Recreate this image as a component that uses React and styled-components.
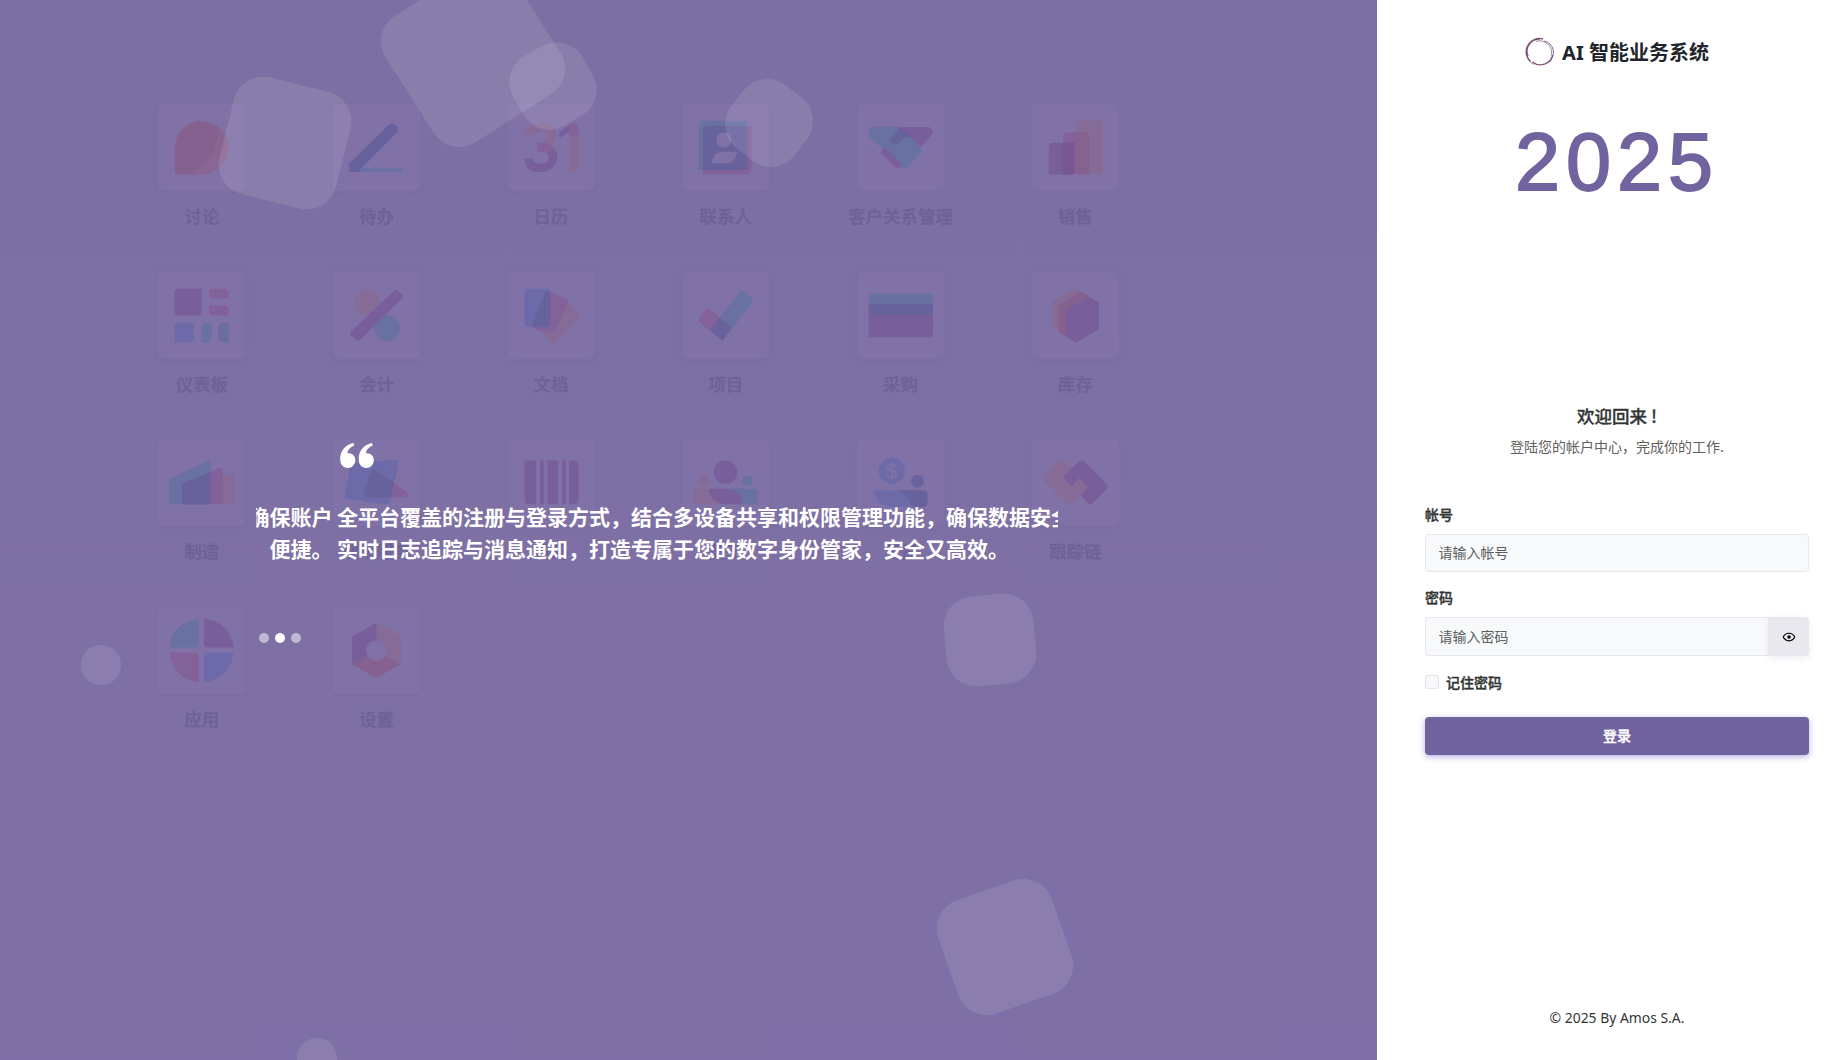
import React from 'react';
import styled, { createGlobalStyle } from 'styled-components';

const Global = createGlobalStyle`
  *, *::before, *::after { box-sizing: border-box; }
  body { margin: 0; overflow: hidden; font-family: "Noto Sans", "Noto Sans CJK SC", sans-serif; }
`;

const C = {
  teal: '#6970a2', purple: '#785f9b', orange: '#866b97', pink: '#83629a',
  navy: '#67629b', blue: '#6c6aa9', red: '#84618f', wine: '#7d6190', tile: '#8072a7',
};

const Page = styled.div`
  display: grid;
  grid-template-columns: 1377px 1fr;
  height: 1060px;
`;

const Hero = styled.section`
  position: relative;
  display: grid;
  grid-template: 1060px / 1377px;
  overflow: hidden;
  background: linear-gradient(180deg, #7c6fa3 0%, #7e70a5 55%, #7e70a6 100%);
  > * { grid-area: 1 / 1; }
`;

const AppGrid = styled.div`
  display: grid;
  grid-template-columns: repeat(6, 174.7px);
  grid-auto-rows: 167.7px;
  padding: 104px 0 0 114.4px;
`;

const AppItem = styled.div`
  display: flex;
  flex-direction: column;
  align-items: center;
`;

const Tile = styled.svg`
  flex: none;
  width: 87px;
  height: 87px;
  border-radius: 5px;
  background: ${C.tile};
  box-shadow: 0 2px 5px rgba(80, 60, 130, 0.06);
`;

const AppName = styled.span`
  margin-top: 12px;
  font: 500 17.5px/25px "Noto Sans CJK SC", sans-serif;
  color: #6e6198;
  -webkit-text-stroke: 0.3px #6e6198;
  white-space: nowrap;
`;

const Blob = styled.i`
  position: absolute;
  left: ${(p) => p.$x - p.$size / 2}px;
  top: ${(p) => p.$y - p.$size / 2}px;
  width: ${(p) => p.$size}px;
  height: ${(p) => p.$size}px;
  border-radius: 30px;
  background: rgba(255, 255, 255, 0.1);
  transform: rotate(${(p) => p.$turn || 0}deg);
`;

const Carousel = styled.div`
  z-index: 1;
  width: 802px;
  margin: 443px 0 0 256px;
  overflow: hidden;
  align-self: start;
`;

const Track = styled.div`
  display: flex;
  width: 1604px;
  transform: translateX(-721px);
`;

const Slide = styled.div`
  flex: 0 0 802px;
  padding-right: ${(p) => (p.$previous ? '4.5px' : '0')};
  text-align: ${(p) => (p.$previous ? 'right' : 'left')};
`;

const QuoteMark = styled.svg`
  display: block;
  width: 37px;
  height: 25px;
  margin: 0 0 32px 2px;
  visibility: ${(p) => (p.$hidden ? 'hidden' : 'visible')};
`;

const QuoteText = styled.p`
  margin: 0;
  font: 700 21px/32px "Noto Sans CJK SC", sans-serif;
  color: #fff;
  white-space: nowrap;
`;

const Dots = styled.div`
  display: flex;
  gap: 6px;
  padding: 69px 0 0 3px;
`;

const Dot = styled.i`
  width: 10px;
  height: 10px;
  border-radius: 50%;
  background: ${(p) => (p.$active ? '#fff' : 'rgba(255, 255, 255, 0.5)')};
`;

const Side = styled.main`
  display: flex;
  flex-direction: column;
  padding: 32px 39px 0 48px;
  background: #fff;
  color: #313533;
`;

const Brand = styled.header`
  display: flex;
  align-items: center;
  justify-content: center;
  gap: 7px;
  height: 40px;
  font: 700 20px/40px "Noto Sans", "Noto Sans CJK SC", sans-serif;
  color: #212529;
`;

const BrandName = styled.span`
  padding-top: 2px;
`;

const Year = styled.div`
  height: 92px;
  margin-top: 44px;
  text-align: center;
  font: 400 81px/92px "Liberation Sans", sans-serif;
  letter-spacing: 6px;
  color: #71639e;
  -webkit-text-stroke: 1.8px #71639e;
`;

const Welcome = styled.h1`
  margin: 194px 0 0;
  text-align: center;
  font: 500 17.5px/28px "Noto Sans CJK SC", sans-serif;
  -webkit-text-stroke: 0.3px #313533;
`;

const Hint = styled.p`
  margin: 5px 0 0;
  text-align: center;
  font: 400 14px/22px "Noto Sans CJK SC", sans-serif;
  color: #5f6160;
`;

const Form = styled.form`
  display: flex;
  flex-direction: column;
  margin-top: 47px;
`;

const Label = styled.label`
  font: 500 14px/21px "Noto Sans CJK SC", sans-serif;
  color: #313533;
  -webkit-text-stroke: 0.35px #313533;
`;

const Field = styled.div`
  display: flex;
  height: ${(p) => p.$height}px;
  margin: 9px 0 ${(p) => p.$after}px;
`;

const Input = styled.input`
  flex: 1;
  min-width: 0;
  padding: 0 12.5px 1px;
  border: 1px solid #e7e7ee;
  border-right-width: ${(p) => (p.$joined ? 0 : '1px')};
  border-radius: ${(p) => (p.$joined ? '4px 0 0 4px' : '4px')};
  background: #f8f9fb;
  font: 400 14px/21px "Noto Sans CJK SC", sans-serif;
  outline: 0;
  &::placeholder { color: #5a5e5d; opacity: 1; }
`;

const EyeButton = styled.button`
  display: flex;
  align-items: center;
  justify-content: center;
  width: 41px;
  padding: 0;
  border: 0;
  border-radius: 0 4px 4px 0;
  background: #e9e8ef;
  box-shadow: 0 2px 6px rgba(130, 120, 180, 0.14);
`;

const Remember = styled.div`
  display: flex;
  align-items: center;
  gap: 7px;
  height: 21px;
`;

const Check = styled.input`
  appearance: none;
  width: 14px;
  height: 14px;
  margin: -2px 0 0;
  border: 1px solid #e3e3ea;
  border-radius: 3px;
  background: #f8f9fb;
`;

const Submit = styled.button`
  height: 38px;
  margin-top: 24px;
  padding: 0 0 1px;
  border: 0;
  border-radius: 4px;
  background: #71639e;
  box-shadow: 0 2px 6px rgba(98, 84, 200, 0.45);
  font: 500 14px/21px "Noto Sans CJK SC", sans-serif;
  color: #fff;
  -webkit-text-stroke: 0.35px #fff;
`;

const Footer = styled.footer`
  margin-top: 252px;
  text-align: center;
  font: 400 13.9px/21px "Noto Sans", sans-serif;
`;

/* App drawings share one 260-unit square per tile. */
const apps = [
  ['讨论', <>
    <path d="M50 130A80 80 0 1 1 130 211H62Q50 211 50 199Z" fill={C.red} />
    <path d="M181 70A80 80 0 0 1 130 211H92Q180 170 181 70Z" fill="#8a6694" />
  </>],
  ['待办', <>
    <path d="M75 192H204Q212 193 209 198Q208 203 202 203H75Z" fill={C.teal} />
    <path d="M48 203V178L166 63A17 17 0 0 1 191 85L74 203Z" fill={C.navy} />
  </>],
  ['日历', <>
    <g fill="none" strokeWidth="25">
      <path d="M61 93C66 66 131 58 130 96Q130 124 88 128" stroke={C.orange} />
      <path d="M88 128C151 126 147 191 96 191Q63 191 61 162" stroke={C.purple} />
      <path d="M88 128Q118 130 128 142" stroke={C.pink} />
    </g>
    <path d="M184 80H212V190Q212 203 200 203H184Z" fill={C.orange} />
    <path d="M153 103V86L184 62Q205 52 212 70V78L184 82Z" fill={C.purple} />
    <path d="M184 62Q208 52 212 75V90Q205 98 184 96Z" fill={C.pink} />
  </>],
  ['联系人', <>
    <path d="M62 65H208V195Q208 211 190 211H62Z" fill={C.pink} />
    <path d="M50 68Q50 50 68 50H195V197H50Z" fill={C.teal} />
    <path d="M62 80Q62 65 78 65H195V197H62Z" fill={C.navy} />
    <ellipse cx="125" cy="108" rx="22" ry="23" fill={C.tile} />
    <path d="M89 177Q92 143 122 143H164Q162 177 130 177Z" fill={C.tile} />
  </>],
  ['客户关系管理', <>
    <path d="M120 69H212Q233 72 223 92L192 127L150 112Z" fill={C.purple} />
    <path d="M84 130L134 180Q130 196 118 193L72 151Q70 136 84 130Z" fill={C.pink} />
    <path d="M46 69H130L190 130Q197 138 190 147L149 190Q141 197 133 188L38 98Q24 78 46 69Z" fill={C.teal} />
    <path d="M130 69L162 100Q147 96 135 107L120 120Q108 124 98 111V102Z" fill={C.navy} />
    <path d="M84 130L134 180L126 190L72 145Z" fill={C.purple} />
  </>],
  ['销售', <>
    <path d="M133 62Q133 50 145 50H200Q212 50 212 62V199Q212 211 200 211H133Z" fill={C.orange} />
    <path d="M93 97Q93 85 105 85H170V199Q170 211 158 211H93Z" fill={C.pink} />
    <path d="M133 85H170V199Q170 211 158 211H133Z" fill="#85628f" />
    <path d="M50 128Q50 116 62 116H127V199Q127 211 115 211H50Z" fill={C.purple} />
    <path d="M93 116H127V199Q127 211 115 211H93Z" fill="#765791" />
  </>],
  ['仪表板', <>
    <path d="M49 61Q49 50 60 50H130V119Q130 130 119 130H49Z" fill={C.purple} />
    <path d="M153 50H198Q211 50 211 64V80H166Q153 80 153 66Z" fill={C.pink} />
    <path d="M153 99H198Q211 99 211 113V130H166Q153 130 153 116Z" fill="#84609a" />
    <path d="M49 164Q49 152 61 152H107V199Q107 211 95 211H49Z" fill={C.blue} />
    <path d="M130 168Q130 152 144 152H160V195Q160 211 146 211H130Z" fill={C.teal} />
    <path d="M180 168Q180 152 194 152H211V211H196Q180 211 180 195Z" fill="#696d9f" />
  </>],
  ['会计', <>
    <circle cx="102" cy="92" r="38" fill={C.orange} />
    <circle cx="161" cy="168" r="38" fill={C.teal} />
    <path d="M183 55Q190 50 196 57L207 67Q212 73 206 79L83 202Q75 209 68 202L54 190Q48 184 54 178Z" fill={C.purple} />
  </>],
  ['文档', <>
    <path d="M125 109L161 84Q172 78 180 88L209 127Q216 135 208 143L145 208Q136 215 128 208L75 158Z" fill={C.orange} />
    <path d="M125 58L172 78Q182 83 178 94L144 174Q138 187 124 183L82 170Q72 164 76 152L108 66Q114 55 125 58Z" fill={C.pink} />
    <path d="M62 50H115Q127 50 127 62V153Q127 165 115 165H62Q49 165 49 152V63Q49 50 62 50Z" fill={C.blue} />
    <path d="M112 60L127 60V153Q127 165 115 165H74L76 150Z" fill={C.navy} />
  </>],
  ['项目', <>
    <path d="M75 106L151 166L121 205L53 152Q46 145 52 137Z" fill={C.pink} />
    <path d="M178 54L206 75Q216 83 209 94L151 166L113 136Z" fill={C.teal} />
    <path d="M113 136L151 166L121 205L84 174Z" fill={C.navy} />
  </>],
  ['采购', <>
    <path d="M35 95H227V181Q227 195 213 195H35Z" fill={C.purple} />
    <path d="M35 78Q35 64 49 64H227V126H49Q35 126 35 112Z" fill={C.teal} />
    <path d="M35 95H227V114Q227 126 215 126H49Q35 126 35 112Z" fill={C.navy} />
  </>],
  ['库存', <>
    <path d="M61 89L130 49L168 70L86 180L61 170Z" fill={C.orange} />
    <path d="M80 98L146 59L171 73L103 195L80 181Z" fill={C.red} />
    <path d="M103 114L168 74L200 90V171L132 211L103 194Z" fill={C.purple} />
  </>],
  ['制造', <>
    <path d="M124 129L226 103V183Q226 195 214 195H124Z" fill={C.orange} />
    <path d="M72 133L184 86Q194 82 194 93V183Q194 195 182 195H72Z" fill={C.pink} />
    <path d="M34 119L148 66Q157 62 157 72V183Q157 195 145 195H34Z" fill={C.teal} />
    <path d="M72 133L157 99V183Q157 195 145 195H72Z" fill={C.navy} />
  </>],
  ['现场服务', <>
    <path d="M112 98Q121 88 132 97L223 160Q230 170 217 175H105Q88 174 93 160Z" fill={C.pink} />
    <path d="M66 71L182 63Q197 63 195 77L170 184Q166 197 154 195L47 180Q33 178 35 166L52 82Q55 72 66 71Z" fill={C.blue} />
    <path d="M112 98Q121 88 132 97L183 132L173 175H105Q88 174 93 160Z" fill={C.navy} />
  </>],
  ['条码', <>
    <path d="M49 64H84V195H65Q49 195 49 179Z" fill={C.purple} />
    <path d="M96 64H107V195H96Z M118 64H150V195H118Z M162 64H173V195H162Z" fill={C.purple} />
    <path d="M183 64H195Q211 66 211 82V179Q211 195 195 195H183Z" fill={C.purple} />
  </>],
  ['员工', <>
    <circle cx="130" cy="99" r="35" fill={C.purple} />
    <circle cx="65" cy="126" r="16" fill={C.orange} />
    <circle cx="196" cy="126" r="16" fill={C.teal} />
    <path d="M50 149H180V195H50Q34 195 34 179V165Q34 149 50 149Z" fill={C.orange} />
    <path d="M150 149H211Q227 149 227 165V179Q227 195 211 195H150Z" fill={C.teal} />
    <path d="M80 149H135Q176 154 181 195H126Q84 190 80 149Z" fill={C.purple} />
  </>],
  ['工资', <>
    <circle cx="104" cy="95" r="39" fill={C.blue} />
    <path d="M118 83Q115 77 104 77Q91 77 91 86Q91 94 104 95Q118 97 118 106Q118 115 104 115Q91 115 89 105M104 71V121" fill="none" stroke={C.tile} strokeWidth="6" />
    <circle cx="181" cy="126" r="19" fill={C.navy} />
    <path d="M120 153H198Q211 153 211 166V188Q211 203 196 203H120Z" fill={C.navy} />
    <path d="M50 153H105Q158 157 163 203H105Q56 198 50 153Z" fill={C.blue} />
  </>],
  ['跟踪链', <>
    <path d="M77 68Q86 60 95 68L120 90L101 111L122 137L142 116L166 145L122 191Q114 199 105 191L38 126Q30 118 38 108Z" fill={C.orange} />
    <path d="M139 68Q148 60 157 68L222 133Q230 142 222 151L185 189Q176 200 166 191L145 168L166 145L142 116L120 141L98 121Q92 112 100 105Z" fill={C.purple} />
  </>],
  ['应用', <>
    <path d="M34 121Q42 48 122 34V109Q122 121 110 121Z" fill={C.teal} />
    <path d="M137 34Q216 45 226 121H149Q137 121 137 109Z" fill={C.purple} />
    <path d="M34 136H110Q122 136 122 148V226Q45 213 34 136Z" fill={C.pink} />
    <path d="M137 148Q137 136 149 136H226Q216 214 137 226Z" fill={C.blue} />
  </>],
  ['设置', <>
    <path d="M130 130V48L201 86Q204 88 204 92V168L198 172Z" fill={C.orange} />
    <path d="M130 130V48L60 86Q57 88 57 92V168L62 172Z" fill={C.purple} />
    <path d="M130 130L199 169L200 172L136 209Q130 212 124 209L59 172V170Z" fill={C.red} />
    <circle cx="130" cy="130" r="31" fill={C.tile} />
  </>],
];

const blobs = [
  { x: 472.8, y: 54.8, size: 150, turn: -32.5 },
  { x: 284.7, y: 142.5, size: 120, turn: 14 },
  { x: 553, y: 86.3, size: 80, turn: -30 },
  { x: 769, y: 122.8, size: 80, turn: 38 },
  { x: 990.2, y: 640.3, size: 90, turn: -5 },
  { x: 1005, y: 947.2, size: 120, turn: -19.3 },
  { x: 101, y: 665.4, size: 40 },
  { x: 317, y: 1058, size: 40 },
];

function Quote({ hidden }) {
  return (
    <QuoteMark viewBox="0 0 37 25" $hidden={hidden} fill="#fff">
      <path d="M14.5 0L15.3 2.6C11 4.2 8.7 6.8 8.4 10.3C13 9.6 16.3 12.8 16.3 17C16.3 21.6 13 25 8.6 25C4 25 1.2 21.6 1.2 15.8C1.2 7.5 6.6 1.6 14.5 0Z" />
      <path d="M33 0L33.8 2.6C29.5 4.2 27.2 6.8 26.9 10.3C31.5 9.6 34.8 12.8 34.8 17C34.8 21.6 31.5 25 27.1 25C22.5 25 19.7 21.6 19.7 15.8C19.7 7.5 25.1 1.6 33 0Z" />
    </QuoteMark>
  );
}

function Logo() {
  return (
    <svg width="30" height="30" viewBox="0 0 30 30" fill="none" stroke="#7b5676">
      <path d="M9 27.5A13.2 13.2 0 0 1 4 8" strokeWidth="0.7" />
      <path d="M5.5 24.5A13 13 0 0 1 15 1.9" strokeWidth="1.5" />
      <path d="M3 19A12.6 12.6 0 0 1 18 2" strokeWidth="1.3" />
      <path d="M11 4.4A12 12 0 0 1 26.3 18.5" strokeWidth="0.7" />
      <path d="M19 4A12.5 12.5 0 0 1 28.3 13Q29.4 20 23.5 25" strokeWidth="0.9" />
      <path d="M7.5 25A12.7 12.7 0 0 0 27.8 18" strokeWidth="1.4" />
    </svg>
  );
}

export default function App() {
  return (
    <Page>
      <Global />
      <Hero>
        <AppGrid>
          {apps.map(([name, drawing]) => (
            <AppItem key={name}>
              <Tile viewBox="0 0 260 260">{drawing}</Tile>
              <AppName>{name}</AppName>
            </AppItem>
          ))}
        </AppGrid>
        {blobs.map((b) => (
          <Blob key={b.x} $x={b.x} $y={b.y} $size={b.size} $turn={b.turn} />
        ))}
        <Carousel>
          <Track>
            <Slide $previous>
              <Quote hidden />
              <QuoteText>确保账户</QuoteText>
              <QuoteText>、便捷。</QuoteText>
            </Slide>
            <Slide>
              <Quote />
              <QuoteText>全平台覆盖的注册与登录方式，结合多设备共享和权限管理功能，确保数据安全</QuoteText>
              <QuoteText>实时日志追踪与消息通知，打造专属于您的数字身份管家，安全又高效。</QuoteText>
            </Slide>
          </Track>
          <Dots>
            <Dot />
            <Dot $active />
            <Dot />
          </Dots>
        </Carousel>
      </Hero>
      <Side>
        <Brand>
          <Logo />
          <BrandName>AI 智能业务系统</BrandName>
        </Brand>
        <Year>2025</Year>
        <Welcome>欢迎回来 !</Welcome>
        <Hint>登陆您的帐户中心，完成你的工作.</Hint>
        <Form>
          <Label>帐号</Label>
          <Field $height={38} $after={15}>
            <Input placeholder="请输入帐号" />
          </Field>
          <Label>密码</Label>
          <Field $height={39} $after={16}>
            <Input placeholder="请输入密码" $joined />
            <EyeButton type="button">
              <svg width="14" height="14" viewBox="0 0 24 24">
                <path d="M12,9A3,3 0 0,1 15,12A3,3 0 0,1 12,15A3,3 0 0,1 9,12A3,3 0 0,1 12,9M12,4.5C17,4.5 21.27,7.61 23,12C21.27,16.39 17,19.5 12,19.5C7,19.5 2.73,16.39 1,12C2.73,7.61 7,4.5 12,4.5M3.18,12C4.83,15.36 8.24,17.5 12,17.5C15.76,17.5 19.17,15.36 20.82,12C19.17,8.64 15.76,6.5 12,6.5C8.24,6.5 4.83,8.64 3.18,12Z" />
              </svg>
            </EyeButton>
          </Field>
          <Remember>
            <Check type="checkbox" />
            <Label>记住密码</Label>
          </Remember>
          <Submit type="button">登录</Submit>
        </Form>
        <Footer>© 2025 By Amos S.A.</Footer>
      </Side>
    </Page>
  );
}
